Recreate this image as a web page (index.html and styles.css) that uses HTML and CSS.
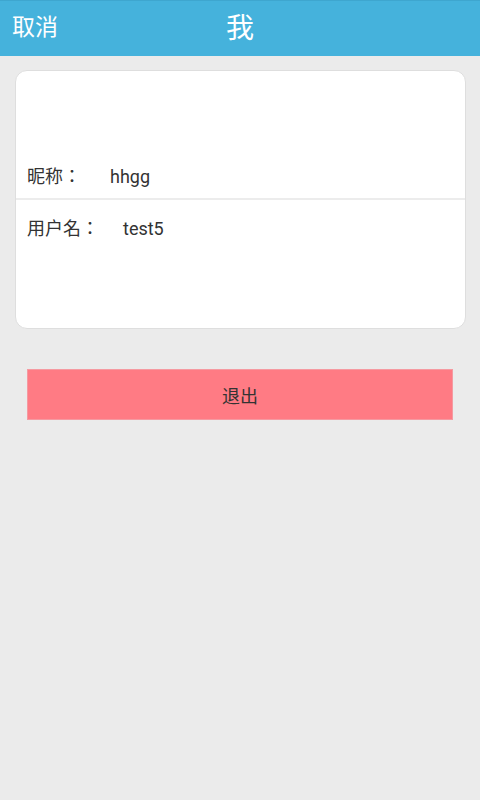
FILE: index.html
```html
<!DOCTYPE html>
<html lang="zh-CN">

<head>
    <meta charset="UTF-8">
    <meta name="viewport" content="width=device-width, initial-scale=1.0">
    <title>我</title>
    <link rel="stylesheet" href="styles.css">
</head>

<body>
    <div class="topbar">
        <span class="cancel">取消</span>
        <h1 class="title">我</h1>
    </div>

    <div class="card">
        <div class="row row-top">
            <span class="label" lang="zh-TW">昵称：</span><span class="value nick">hhgg</span>
        </div>
        <div class="row row-bottom">
            <span class="label" lang="zh-TW">用户名：</span><span class="value user">test5</span>
        </div>
    </div>

    <button class="logout" type="button">退出</button>
</body>

</html>
```

FILE: styles.css
```css
body {
    font-family: Roboto, "Noto Sans CJK SC", sans-serif;
    margin: 0;
    background-color: #ebebeb;
    width: 480px;
    height: 800px;
}

.topbar {
    height: 56px;
    background-color: #45b2dc;
    border-top: 1px solid #3ea6cf;
    box-sizing: border-box;
    position: relative;
    display: flex;
    align-items: center;
    justify-content: center;
    color: #fff;
}

.cancel {
    position: absolute;
    left: 12px;
    top: 12px;
    font-size: 23px;
    line-height: 30px;
}

.title {
    margin: 0;
    font-size: 28px;
    font-weight: normal;
    line-height: 36px;
}

.card {
    margin: 14px 14px 0 15px;
    background-color: #fff;
    border: 1px solid #dedede;
    border-radius: 12px;
    box-sizing: border-box;
    height: 259px;
}

.row {
    height: 129px;
    padding-left: 11px;
    font-size: 18px;
    line-height: 24px;
    color: #333;
    box-sizing: border-box;
}

.row-top {
    padding-top: 92px;
    border-bottom: 2px solid #ececec;
}

.row-bottom {
    padding-top: 15px;
}

.label {
    font-family: "Noto Sans CJK TC", sans-serif;
}

.nick {
    margin-left: 29px;
}

.user {
    margin-left: 24px;
}

.logout {
    display: block;
    width: 426px;
    height: 51px;
    margin: 40px 0 0 27px;
    background-color: #ff7b84;
    border: 1px solid #f59aa1;
    color: #333;
    font-family: inherit;
    font-size: 18px;
    padding: 0;
}
```
